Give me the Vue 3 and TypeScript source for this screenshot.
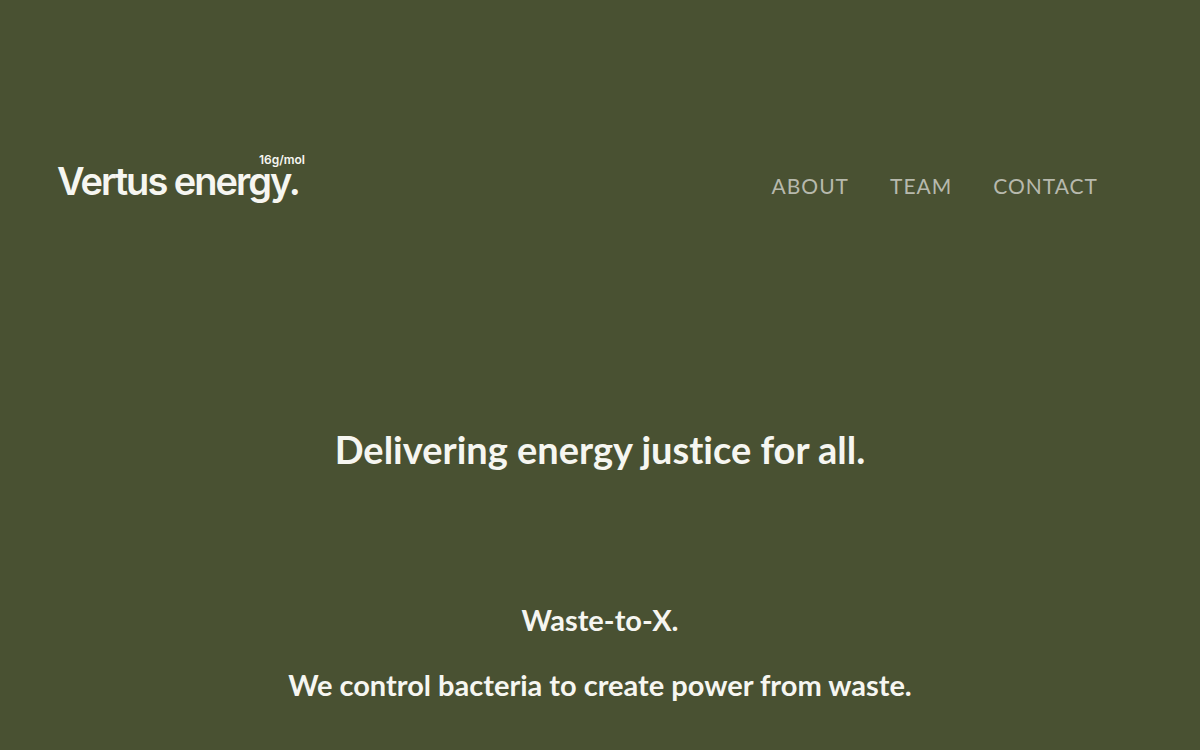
<script setup lang="ts">
interface NavLink {
  label: string
  href: string
}

const links: NavLink[] = [
  { label: 'ABOUT', href: '#about' },
  { label: 'TEAM', href: '#team' },
  { label: 'CONTACT', href: '#contact' },
]
</script>

<template>
  <div class="page">
    <header class="header">
      <a class="logo" href="#home">
        <span class="mass">16g/mol</span>
        <span class="name">Vertus energy.</span>
      </a>
      <nav class="nav" aria-label="Main">
        <a v-for="link in links" :key="link.label" :href="link.href">{{ link.label }}</a>
      </nav>
    </header>
    <main class="main">
      <h1>Delivering energy justice for all.</h1>
      <h2>Waste-to-X.</h2>
      <p>We control bacteria to create power from waste.</p>
    </main>
  </div>
</template>

<style>
body {
  background: #495132;
}
</style>

<style scoped>
.page {
  color: #f6f6f1;
  font-family: Lato, "Open Sans", sans-serif;
  font-variant-ligatures: none;
}
.header {
  display: flex;
  justify-content: space-between;
  align-items: center;
  padding: 153px 102px 0 57px;
}
a {
  color: inherit;
  text-decoration: none;
}
.logo {
  display: flex;
  flex-direction: column;
  font-family: Inter, "Liberation Sans", sans-serif;
  font-weight: 600;
}
.name {
  padding: 0 6px 9px 0;
  font-size: 38px;
  line-height: 28px;
  letter-spacing: -2px;
}
.mass {
  align-self: flex-end;
  font-size: 12px;
  line-height: 14px;
}
.nav {
  display: flex;
  gap: 41px;
  padding-top: 14px;
  color: #b7b9ad;
  font-size: 21px;
  line-height: 24px;
  letter-spacing: 1px;
}
.main {
  padding: 221px 24px 40px;
  text-align: center;
}
h1,
h2,
p {
  margin: 0;
  font-weight: 700;
}
h1 {
  font-size: 38px;
  line-height: 48px;
}
h2 {
  margin-top: 129px;
  font-size: 29px;
  line-height: 36px;
}
p {
  margin-top: 29px;
  font-size: 29px;
  line-height: 36px;
}
</style>
